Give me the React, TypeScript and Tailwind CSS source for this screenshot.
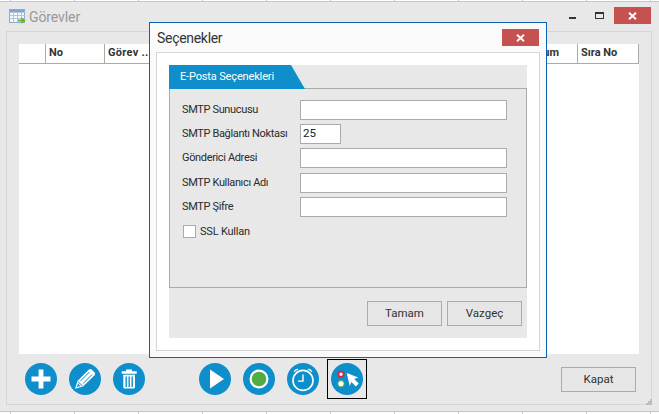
import React from "react";

const font = { fontFamily: 'Roboto, "Noto Sans", sans-serif' };

function Circle({ children }: { children: React.ReactNode }) {
  return (
    <svg width="32" height="32" viewBox="0 0 32 32" className="block shrink-0">
      <circle cx="16" cy="16" r="16" fill="#0e8fcb" />
      {children}
    </svg>
  );
}

const Plus = () => (
  <Circle>
    <path d="M13.6 6.5h4.8v7.1h7.1v4.8h-7.1v7.1h-4.8v-7.1H6.5v-4.8h7.1z" fill="#fff" />
  </Circle>
);
const Pencil = () => (
  <Circle>
    <path d="M6 25.8l2.4-7.8L20 6.6a2 2 0 0 1 2.6 0l3 3a2 2 0 0 1 0 2.6L14 23.6z" fill="#fff" />
    <path d="M11.4 18l9-9M14 20.6l9-9M9 18.6l4.6 4.6" stroke="#0e8fcb" strokeWidth="1" fill="none" />
    <path d="M8 24l1-3.4 2.4 2.4z" fill="#0e8fcb" />
  </Circle>
);
const Trash = () => (
  <Circle>
    <path d="M13 6.6h6v1.6h4.7v2.6H8.7V8.2H13z" fill="#fff" />
    <path d="M10.3 11.8h11.7v12.4a1.4 1.4 0 0 1-1.4 1.4h-8.9a1.4 1.4 0 0 1-1.4-1.4z" fill="#fff" />
    <path d="M13.2 13.4v10.6M16.2 13.4v10.6M19.2 13.4v10.6" stroke="#0e8fcb" strokeWidth="1.4" />
  </Circle>
);
const Play = () => (
  <Circle>
    <path d="M11 6.5L25 16 11 25.5z" fill="#fff" />
  </Circle>
);
const Rec = () => (
  <Circle>
    <circle cx="16" cy="16" r="8.4" fill="#51ad43" stroke="#fff" strokeWidth="2.2" />
  </Circle>
);
const Alarm = () => (
  <Circle>
    <circle cx="16" cy="17.4" r="10" fill="none" stroke="#fff" strokeWidth="1.6" />
    <path d="M16 11.5v6.6h-5" fill="none" stroke="#fff" strokeWidth="1.4" />
    <path d="M6.6 9.4a4 4 0 0 1 5-3.4zM25.4 9.4a4 4 0 0 0-5-3.4z" fill="#fff" />
  </Circle>
);
const Pointer = () => (
  <Circle>
    <circle cx="10" cy="11.2" r="2.6" fill="#fff" stroke="#d9263a" strokeWidth="1.8" />
    <circle cx="10" cy="20.8" r="3.2" fill="#fff" stroke="#51ad43" strokeWidth="1" />
    <path d="M15.7 10l11.5 4.4-4 1.7 4.5 4.5-2.8 2.8-4.5-4.5-1.7 4z" fill="#fff" />
  </Circle>
);

function Btn({ label }: { label: string }) {
  return (
    <div className="w-[75px] h-[25px] border border-[#ababab] bg-[#e6e6e6] flex items-center justify-center text-[11.5px] text-[#333]">
      {label}
    </div>
  );
}

function Row({ label, value, short }: { label: string; value?: string; short?: boolean }) {
  return (
    <div className="flex items-center h-[20px]">
      <span className="w-[118px] text-[11px] leading-[16px] tracking-[-0.35px] text-[#2b2b2b] whitespace-nowrap">{label}</span>
      <div className={`${short ? "w-[41px]" : "w-[207px]"} h-[20px] bg-white border border-[#ababab] px-[2px] flex items-center text-[11.5px] text-[#222]`}>
        {value}
      </div>
    </div>
  );
}

function CloseBtn() {
  return (
    <div className="w-[37px] h-[17px] bg-[#c75050] flex items-center justify-center">
      <svg width="9" height="8" viewBox="0 0 9 8">
        <path d="M1 .8l7 6.4M8 .8L1 7.2" stroke="#fff" strokeWidth="1.9" />
      </svg>
    </div>
  );
}

function Strip() {
  return (
    <div className="flex h-full pl-[10px]">
      {Array.from({ length: 11 }).map((_, i) => (
        <div key={i} className="w-[64px] h-full shrink-0 border-l border-[#c4ccd6]" />
      ))}
    </div>
  );
}

export default function App() {
  return (
    <div className="relative w-[659px] h-[414px] overflow-hidden bg-white flex flex-col" style={font}>
      <div className="h-[1px] shrink-0">
        <Strip />
      </div>
      <div className="flex-1 min-h-0 flex flex-col bg-[#e8e8e8] border-y border-[#c2c7ce]">
        <div className="h-[29px] shrink-0 flex items-start justify-between pl-[9px]">
          <div className="flex items-center gap-[3px] mt-[5px]">
            <svg width="17" height="16" viewBox="0 0 17 16">
              <rect x=".5" y=".5" width="15" height="13" fill="#f4f8fc" stroke="#8fa9c8" />
              <path d="M.5 3.5h15M.5 6.5h15M.5 9.5h15M4.5 1v12M8.5 1v12M12.5 1v12" stroke="#b3c6dc" />
              <rect x="1" y="1" width="14" height="2" fill="#7fa6d2" />
              <path d="M9 10.5h3.5V8l4 3.4-4 3.4v-2.3H9z" fill="#6cb52f" />
            </svg>
            <span className="text-[14px] leading-[20px] tracking-[-0.1px] text-[#999]">Görevler</span>
          </div>
          <div className="flex items-start mr-[8px] mt-[5px]">
            <div className="w-[7px] h-[2px] bg-[#333] mr-[19px] mt-[10px]" />
            <div className="w-[9px] h-[7px] border border-t-2 border-[#333] mr-[10px] mt-[5px]" />
            <CloseBtn />
          </div>
        </div>
        <div className="ml-[6px] mr-[7px] h-[374px] border border-[#d6d6d6] pt-[12px] px-[12px] flex flex-col">
          <div className="h-[310px] w-[620px] bg-white shrink-0">
            <div className="h-[20px] border-b border-[#ababab] flex text-[11px] font-bold text-[#333] leading-[18px]">
              <div className="w-[27px] border-r border-[#ababab]" />
              <div className="w-[59px] border-r border-[#ababab] pl-[3px]">No</div>
              <div className="flex-1 pl-[3px] whitespace-nowrap tracking-[0.3px]">Görev ...</div>
              <div className="pr-[18px]">Durum</div>
              <div className="w-[62px] border-x border-[#ababab] pl-[3px]">Sıra No</div>
            </div>
          </div>
          <div className="flex flex-1 items-start">
            <div className="flex gap-[12px] mt-[9px] ml-[6px]">
              <Plus />
              <Pencil />
              <Trash />
            </div>
            <div className="flex gap-[12px] mt-[9px] ml-[54px]">
              <Play />
              <Rec />
              <Alarm />
            </div>
            <div className="ml-[8px] mt-[5px] w-[40px] h-[40px] border border-black flex items-center justify-center">
              <Pointer />
            </div>
            <div className="ml-[194px] mt-[13px]">
              <Btn label="Kapat" />
            </div>
          </div>
        </div>
      </div>
      <div className="h-[2px] shrink-0">
        <Strip />
      </div>

      <div className="absolute left-[149px] top-[22px] w-[398px] h-[336px] bg-[#fafafa] border border-[#0b62b4] flex flex-col">
        <div className="h-[29px] shrink-0 flex items-start justify-between px-[7px]">
          <span className="text-[14px] leading-[20px] mt-[5px] tracking-[-0.3px] text-[#333]">Seçenekler</span>
          <div className="mt-[6px]">
            <CloseBtn />
          </div>
        </div>
        <div className="mx-[6px] h-[299px] bg-white border border-[#d6d6d6] px-[12px] pt-[12px]">
          <div className="w-[358px] h-[273px] bg-[#e8e8e8] flex flex-col">
            <div className="h-[23px] shrink-0 relative">
              <div
                className="absolute left-0 top-0 z-10 w-[136px] h-[24px] bg-[#0e8fcb] text-white text-[11px] leading-[23px] tracking-[-0.15px] pl-[11px]"
                style={{ clipPath: "polygon(0 0, 122px 0, 136px 100%, 0 100%)" }}
              >
                E-Posta Seçenekleri
              </div>
            </div>
            <div className="h-[200px] shrink-0 border border-[#ababab] pl-[12px] pt-[11px] flex flex-col gap-[4px]">
              <Row label="SMTP Sunucusu" />
              <Row label="SMTP Bağlantı Noktası" value="25" short />
              <Row label="Gönderici Adresi" />
              <div className="mt-[1px]">
                <Row label="SMTP Kullanıcı Adı" />
              </div>
              <Row label="SMTP Şifre" />
              <div className="flex items-center gap-[4px] mt-[4px] ml-[1px] h-[13px]">
                <div className="w-[13px] h-[13px] bg-white border border-[#ababab]" />
                <span className="text-[11px] leading-[16px] tracking-[-0.2px] text-[#2b2b2b]">SSL Kullan</span>
              </div>
            </div>
            <div className="flex justify-end gap-[5px] pr-[5px] mt-[13px]">
              <Btn label="Tamam" />
              <Btn label="Vazgeç" />
            </div>
          </div>
        </div>
      </div>

      <div className="absolute right-[7px] bottom-[9px] w-[6px] h-[6px]">
        <svg width="6" height="6" viewBox="0 0 6 6" className="block">
          <path d="M4 0h2v2H4zM2 2h2v2H2zM4 2h2v2H4zM0 4h2v2H0zM2 4h2v2H2zM4 4h2v2H4z" fill="#bdbdbd" />
        </svg>
      </div>
    </div>
  );
}
